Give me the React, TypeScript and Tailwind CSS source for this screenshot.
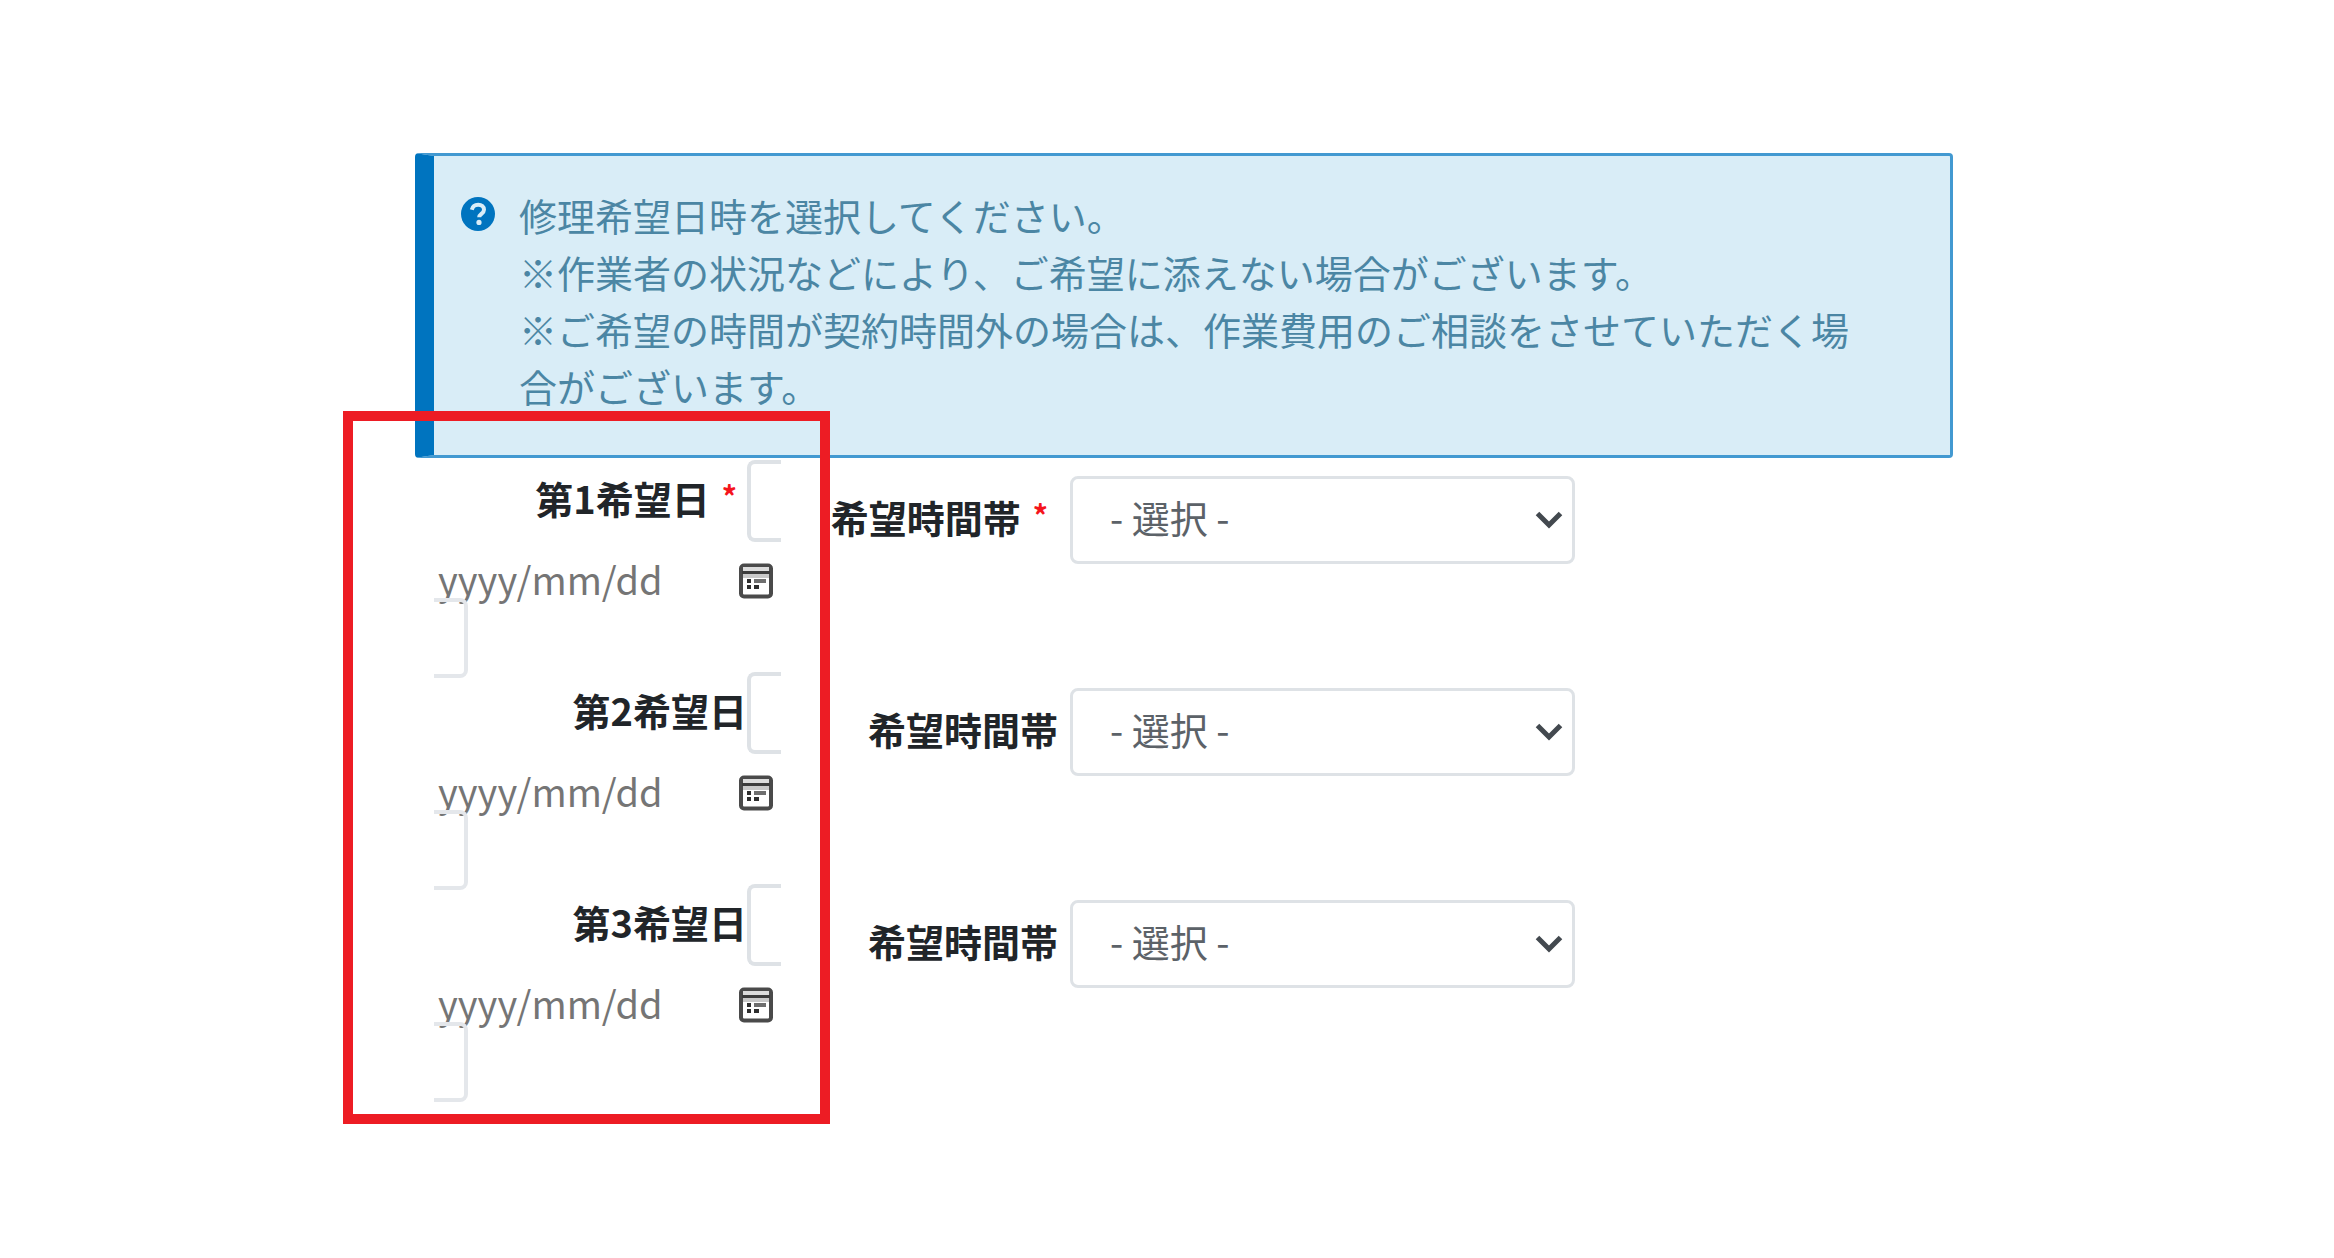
import React from "react";

type Choice = { id: number; required: boolean };

const choices: Choice[] = [
  { id: 1, required: true },
  { id: 2, required: false },
  { id: 3, required: false },
];

function HelpIcon() {
  return (
    <svg viewBox="0 0 34 34" className="mt-[11px] size-[34px] shrink-0" aria-hidden="true">
      <circle cx="17" cy="17" r="17" fill="#0074bf" />
      <path
        d="M10.800 12.800C11.500 9.600 14 7.800 17.200 7.800c3.400 0 5.800 1.900 5.800 4.900 0 4.100-4.800 4.200-4.800 7.600"
        fill="none"
        stroke="#d9edf7"
        strokeWidth="4"
      />
      <circle cx="18" cy="25.400" r="2.600" fill="#d9edf7" />
    </svg>
  );
}

function CalendarIcon() {
  return (
    <svg viewBox="0 0 36 36" className="size-9" aria-hidden="true">
      <rect x="3" y="2.5" width="30" height="31" rx="3" fill="#fff" stroke="#4a4a4a" strokeWidth="4" />
      <path d="M5 6h26" stroke="#dcdcdc" strokeWidth="4" />
      <path d="M4 9.500h28" stroke="#3c3c3c" strokeWidth="3" />
      <path d="M5 13h26" stroke="#c9c9c9" strokeWidth="4" />
      <path d="M9 18h4M9 24h4M16 24h5" stroke="#2e2e2e" strokeWidth="4" />
      <path d="M16 18h12" stroke="#6e6e6e" strokeWidth="4" />
    </svg>
  );
}

function Required() {
  return <span className="ml-3 mr-[10px] mt-2 text-[30px] leading-9 text-[#f5141c]">*</span>;
}

function ChoiceRow({ id, required }: Choice) {
  const dateId = `date-${id}`;
  const timeId = `time-${id}`;
  return (
    <div className="grid grid-cols-[366px_279px_505px]">
      <div className="-mb-1.5 flex flex-col pl-[19px]">
        <div className="flex items-center justify-end">
          <label htmlFor={dateId} className="flex pb-2 font-bold">
            第{id}希望日
            {required && <Required />}
          </label>
          <span className="h-[82px] w-[34px] rounded-l-lg border-y-4 border-l-4 border-[#dee2e6]" />
        </div>
        <div className="flex h-[65px] items-center pl-1 pt-2">
          <input
            id={dateId}
            type="text"
            placeholder="yyyy/mm/dd"
            className="h-[57px] w-full min-w-0 flex-1 bg-transparent text-[38px] text-[#757575] outline-none placeholder:text-[#757575]"
          />
          <button type="button" aria-label="カレンダーを開く" className="mr-[7px] mt-1 shrink-0">
            <CalendarIcon />
          </button>
        </div>
        <span className="-mt-[9px] h-20 w-[34px] rounded-r-lg border-y-4 border-r-4 border-[#e4e7eb]" />
      </div>
      <label htmlFor={timeId} className="mt-[14px] flex h-[92px] items-center justify-end pb-2 pr-0.5 font-bold">
        <span className="flex">
          希望時間帯
          {required && <Required />}
        </span>
      </label>
      <div className="relative ml-[10px] mt-4 w-[505px]">
        <select
          id={timeId}
          className="h-[88px] w-full appearance-none rounded-lg border-[3px] border-[#dee2e6] bg-white pb-2 pl-[37px] text-[38px] text-[#5c6268]"
        >
          <option>- 選択 -</option>
        </select>
        <svg
          viewBox="0 0 30 20"
          className="pointer-events-none absolute right-[11px] top-[34px] h-5 w-[30px]"
          aria-hidden="true"
        >
          <path d="M3.500 3.500 15 15 26.500 3.500" fill="none" stroke="#43494f" strokeWidth="5" />
        </svg>
      </div>
    </div>
  );
}

export default function App() {
  return (
    <main className="min-h-screen bg-white pb-20 pl-[415px] pr-[381px] pt-[153px] font-['Noto_Sans_CJK_JP',sans-serif] text-[38px] leading-[57px] text-[#212529]">
      <div className="relative">
        <section className="flex gap-6 rounded-[4px] border-[3px] border-l-[19px] border-[#4299d1] border-l-[#0074bf] bg-[#d9edf7] pb-[41px] pl-[27px] pr-[70px] pt-[30px] text-[#4b86a4]">
          <HelpIcon />
          <p>
            修理希望日時を選択してください。
            <br />
            ※作業者の状況などにより、ご希望に添えない場合がございます。
            <br />
            ※ご希望の時間が契約時間外の場合は、作業費用のご相談をさせていただく場合がございます。
          </p>
        </section>
        <form className="pt-[2px]">
          {choices.map((choice) => (
            <ChoiceRow key={choice.id} {...choice} />
          ))}
        </form>
        <div className="pointer-events-none absolute -bottom-7 -left-[72px] top-[258px] w-[487px] border-[10px] border-[#ed1c24]" />
      </div>
    </main>
  );
}
